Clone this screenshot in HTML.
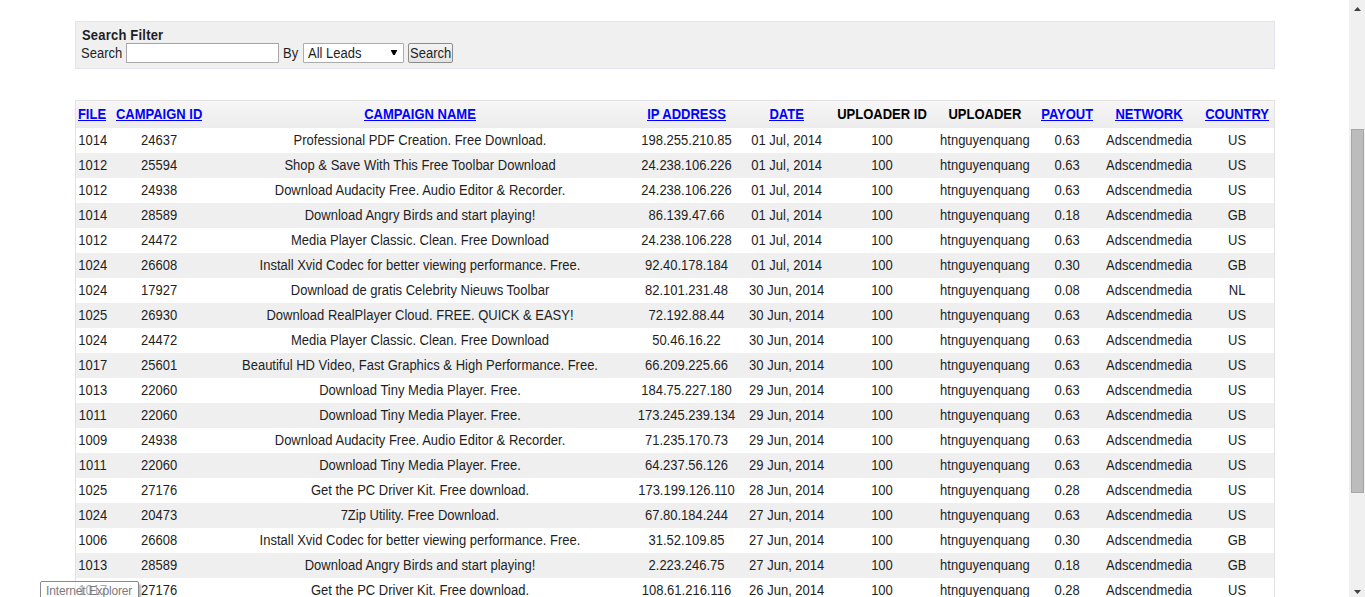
<!DOCTYPE html>
<html><head><meta charset="utf-8">
<style>
html,body{margin:0;padding:0;background:#fff;width:1365px;height:597px;overflow:hidden;position:relative;font-family:"Liberation Sans",sans-serif;font-size:13px;color:#1e1e1e}
.abs{position:absolute}
#filter{position:absolute;left:75px;top:21px;width:1198px;height:46px;background:#f0f0f0;border:1px solid #e6e0f0}
.t{position:absolute;white-space:nowrap;line-height:15px}
#inp{position:absolute;left:126px;top:43px;width:151px;height:18px;background:#fff;border:1px solid #ababab;border-top-color:#a3a3a3}
#sel{position:absolute;left:303px;top:43px;width:99px;height:18px;background:#fff;border:1px solid #acacac;border-radius:1px}
#btn{position:absolute;left:408px;top:43px;width:43px;height:18px;background:linear-gradient(#f4f4f4,#e4e4e4);border:1px solid #8c8c8c;border-radius:2px}
#tbl{position:absolute;left:75px;top:100px;width:1198px;height:497px;border:1px solid #e2e2e2;border-bottom:none}
#head{position:absolute;left:76px;top:101px;width:1198px;height:27px;background:linear-gradient(#f8f6f6,#ececec)}
.row{position:absolute;left:76px;width:1198px;height:25px}
.g{background:#efefef}
.c span,.t span{display:inline-block;transform:scaleY(1.08)}
.c{position:absolute;width:600px;text-align:center;white-space:nowrap;line-height:25px;top:0}
.h{font-weight:bold;line-height:27px;color:#000}
.h a{color:#00f;text-decoration:none;display:inline-block;position:relative;vertical-align:top}
.h a::after{content:'';position:absolute;left:0;right:0;top:19px;height:1px;background:#00f}
#sb{position:absolute;left:1349px;top:0;width:16px;height:597px;background:#f0f0f0}
#thumb{position:absolute;left:1351px;top:129px;width:11px;height:362px;background:#bcbcbc;border:1px solid #a6a6a6}
#tip{position:absolute;left:40px;top:581px;width:97px;height:20px;border:1px solid #8a8a8a;border-radius:2px;background:rgba(255,255,255,0.6);box-shadow:2px 3px 2px rgba(0,0,0,0.3)}
</style></head><body>
<div id="filter"></div>
<div class="t" style="left:82px;top:28px;font-weight:bold;letter-spacing:0.2px"><span>Search Filter</span></div>
<div class="t" style="left:81px;top:46px"><span>Search</span></div>
<div id="inp"></div>
<div class="t" style="left:283px;top:46px"><span>By</span></div>
<div id="sel"></div>
<div class="t" style="left:308px;top:46px"><span>All Leads</span></div>
<svg class="abs" style="left:391px;top:50px" width="6" height="6" viewBox="0 0 6 6"><path d="M0 0H6V0.8L3.8 5H2.2L0 0.8Z" fill="#000"/></svg>
<div id="btn"></div>
<div class="t" style="left:410px;top:46px"><span>Search</span></div>
<div id="tbl"></div>
<div id="head">
<div class="c h" style="left:-284.0px"><a><span>FILE</span></a></div>
<div class="c h" style="left:-216.9px"><a><span>CAMPAIGN ID</span></a></div>
<div class="c h" style="left:44.0px"><a><span>CAMPAIGN NAME</span></a></div>
<div class="c h" style="left:310.5px"><a><span>IP ADDRESS</span></a></div>
<div class="c h" style="left:410.7px"><a><span>DATE</span></a></div>
<div class="c h" style="left:506.0px"><span>UPLOADER ID</span></div>
<div class="c h" style="left:608.9px"><span>UPLOADER</span></div>
<div class="c h" style="left:691.2px"><a><span>PAYOUT</span></a></div>
<div class="c h" style="left:773.0px"><a><span>NETWORK</span></a></div>
<div class="c h" style="left:861.1px"><a><span>COUNTRY</span></a></div>
</div>
<div class="row" style="top:128px">
<div class="c" style="left:-283.3px"><span>1014</span></div>
<div class="c" style="left:-216.9px"><span>24637</span></div>
<div class="c" style="left:44.0px"><span>Professional PDF Creation. Free Download.</span></div>
<div class="c" style="left:310.5px"><span>198.255.210.85</span></div>
<div class="c" style="left:410.7px"><span>01 Jul, 2014</span></div>
<div class="c" style="left:506.0px"><span>100</span></div>
<div class="c" style="left:608.9px"><span>htnguyenquang</span></div>
<div class="c" style="left:691.2px"><span>0.63</span></div>
<div class="c" style="left:773.0px"><span>Adscendmedia</span></div>
<div class="c" style="left:861.1px"><span>US</span></div>
</div>
<div class="row g" style="top:153px">
<div class="c" style="left:-283.3px"><span>1012</span></div>
<div class="c" style="left:-216.9px"><span>25594</span></div>
<div class="c" style="left:44.0px"><span>Shop &amp; Save With This Free Toolbar Download</span></div>
<div class="c" style="left:310.5px"><span>24.238.106.226</span></div>
<div class="c" style="left:410.7px"><span>01 Jul, 2014</span></div>
<div class="c" style="left:506.0px"><span>100</span></div>
<div class="c" style="left:608.9px"><span>htnguyenquang</span></div>
<div class="c" style="left:691.2px"><span>0.63</span></div>
<div class="c" style="left:773.0px"><span>Adscendmedia</span></div>
<div class="c" style="left:861.1px"><span>US</span></div>
</div>
<div class="row" style="top:178px">
<div class="c" style="left:-283.3px"><span>1012</span></div>
<div class="c" style="left:-216.9px"><span>24938</span></div>
<div class="c" style="left:44.0px"><span>Download Audacity Free. Audio Editor &amp; Recorder.</span></div>
<div class="c" style="left:310.5px"><span>24.238.106.226</span></div>
<div class="c" style="left:410.7px"><span>01 Jul, 2014</span></div>
<div class="c" style="left:506.0px"><span>100</span></div>
<div class="c" style="left:608.9px"><span>htnguyenquang</span></div>
<div class="c" style="left:691.2px"><span>0.63</span></div>
<div class="c" style="left:773.0px"><span>Adscendmedia</span></div>
<div class="c" style="left:861.1px"><span>US</span></div>
</div>
<div class="row g" style="top:203px">
<div class="c" style="left:-283.3px"><span>1014</span></div>
<div class="c" style="left:-216.9px"><span>28589</span></div>
<div class="c" style="left:44.0px"><span>Download Angry Birds and start playing!</span></div>
<div class="c" style="left:310.5px"><span>86.139.47.66</span></div>
<div class="c" style="left:410.7px"><span>01 Jul, 2014</span></div>
<div class="c" style="left:506.0px"><span>100</span></div>
<div class="c" style="left:608.9px"><span>htnguyenquang</span></div>
<div class="c" style="left:691.2px"><span>0.18</span></div>
<div class="c" style="left:773.0px"><span>Adscendmedia</span></div>
<div class="c" style="left:861.1px"><span>GB</span></div>
</div>
<div class="row" style="top:228px">
<div class="c" style="left:-283.3px"><span>1012</span></div>
<div class="c" style="left:-216.9px"><span>24472</span></div>
<div class="c" style="left:44.0px"><span>Media Player Classic. Clean. Free Download</span></div>
<div class="c" style="left:310.5px"><span>24.238.106.228</span></div>
<div class="c" style="left:410.7px"><span>01 Jul, 2014</span></div>
<div class="c" style="left:506.0px"><span>100</span></div>
<div class="c" style="left:608.9px"><span>htnguyenquang</span></div>
<div class="c" style="left:691.2px"><span>0.63</span></div>
<div class="c" style="left:773.0px"><span>Adscendmedia</span></div>
<div class="c" style="left:861.1px"><span>US</span></div>
</div>
<div class="row g" style="top:253px">
<div class="c" style="left:-283.3px"><span>1024</span></div>
<div class="c" style="left:-216.9px"><span>26608</span></div>
<div class="c" style="left:44.0px"><span>Install Xvid Codec for better viewing performance. Free.</span></div>
<div class="c" style="left:310.5px"><span>92.40.178.184</span></div>
<div class="c" style="left:410.7px"><span>01 Jul, 2014</span></div>
<div class="c" style="left:506.0px"><span>100</span></div>
<div class="c" style="left:608.9px"><span>htnguyenquang</span></div>
<div class="c" style="left:691.2px"><span>0.30</span></div>
<div class="c" style="left:773.0px"><span>Adscendmedia</span></div>
<div class="c" style="left:861.1px"><span>GB</span></div>
</div>
<div class="row" style="top:278px">
<div class="c" style="left:-283.3px"><span>1024</span></div>
<div class="c" style="left:-216.9px"><span>17927</span></div>
<div class="c" style="left:44.0px"><span>Download de gratis Celebrity Nieuws Toolbar</span></div>
<div class="c" style="left:310.5px"><span>82.101.231.48</span></div>
<div class="c" style="left:410.7px"><span>30 Jun, 2014</span></div>
<div class="c" style="left:506.0px"><span>100</span></div>
<div class="c" style="left:608.9px"><span>htnguyenquang</span></div>
<div class="c" style="left:691.2px"><span>0.08</span></div>
<div class="c" style="left:773.0px"><span>Adscendmedia</span></div>
<div class="c" style="left:861.1px"><span>NL</span></div>
</div>
<div class="row g" style="top:303px">
<div class="c" style="left:-283.3px"><span>1025</span></div>
<div class="c" style="left:-216.9px"><span>26930</span></div>
<div class="c" style="left:44.0px"><span>Download RealPlayer Cloud. FREE. QUICK &amp; EASY!</span></div>
<div class="c" style="left:310.5px"><span>72.192.88.44</span></div>
<div class="c" style="left:410.7px"><span>30 Jun, 2014</span></div>
<div class="c" style="left:506.0px"><span>100</span></div>
<div class="c" style="left:608.9px"><span>htnguyenquang</span></div>
<div class="c" style="left:691.2px"><span>0.63</span></div>
<div class="c" style="left:773.0px"><span>Adscendmedia</span></div>
<div class="c" style="left:861.1px"><span>US</span></div>
</div>
<div class="row" style="top:328px">
<div class="c" style="left:-283.3px"><span>1024</span></div>
<div class="c" style="left:-216.9px"><span>24472</span></div>
<div class="c" style="left:44.0px"><span>Media Player Classic. Clean. Free Download</span></div>
<div class="c" style="left:310.5px"><span>50.46.16.22</span></div>
<div class="c" style="left:410.7px"><span>30 Jun, 2014</span></div>
<div class="c" style="left:506.0px"><span>100</span></div>
<div class="c" style="left:608.9px"><span>htnguyenquang</span></div>
<div class="c" style="left:691.2px"><span>0.63</span></div>
<div class="c" style="left:773.0px"><span>Adscendmedia</span></div>
<div class="c" style="left:861.1px"><span>US</span></div>
</div>
<div class="row g" style="top:353px">
<div class="c" style="left:-283.3px"><span>1017</span></div>
<div class="c" style="left:-216.9px"><span>25601</span></div>
<div class="c" style="left:44.0px"><span>Beautiful HD Video, Fast Graphics &amp; High Performance. Free.</span></div>
<div class="c" style="left:310.5px"><span>66.209.225.66</span></div>
<div class="c" style="left:410.7px"><span>30 Jun, 2014</span></div>
<div class="c" style="left:506.0px"><span>100</span></div>
<div class="c" style="left:608.9px"><span>htnguyenquang</span></div>
<div class="c" style="left:691.2px"><span>0.63</span></div>
<div class="c" style="left:773.0px"><span>Adscendmedia</span></div>
<div class="c" style="left:861.1px"><span>US</span></div>
</div>
<div class="row" style="top:378px">
<div class="c" style="left:-283.3px"><span>1013</span></div>
<div class="c" style="left:-216.9px"><span>22060</span></div>
<div class="c" style="left:44.0px"><span>Download Tiny Media Player. Free.</span></div>
<div class="c" style="left:310.5px"><span>184.75.227.180</span></div>
<div class="c" style="left:410.7px"><span>29 Jun, 2014</span></div>
<div class="c" style="left:506.0px"><span>100</span></div>
<div class="c" style="left:608.9px"><span>htnguyenquang</span></div>
<div class="c" style="left:691.2px"><span>0.63</span></div>
<div class="c" style="left:773.0px"><span>Adscendmedia</span></div>
<div class="c" style="left:861.1px"><span>US</span></div>
</div>
<div class="row g" style="top:403px">
<div class="c" style="left:-283.3px"><span>1011</span></div>
<div class="c" style="left:-216.9px"><span>22060</span></div>
<div class="c" style="left:44.0px"><span>Download Tiny Media Player. Free.</span></div>
<div class="c" style="left:310.5px"><span>173.245.239.134</span></div>
<div class="c" style="left:410.7px"><span>29 Jun, 2014</span></div>
<div class="c" style="left:506.0px"><span>100</span></div>
<div class="c" style="left:608.9px"><span>htnguyenquang</span></div>
<div class="c" style="left:691.2px"><span>0.63</span></div>
<div class="c" style="left:773.0px"><span>Adscendmedia</span></div>
<div class="c" style="left:861.1px"><span>US</span></div>
</div>
<div class="row" style="top:428px">
<div class="c" style="left:-283.3px"><span>1009</span></div>
<div class="c" style="left:-216.9px"><span>24938</span></div>
<div class="c" style="left:44.0px"><span>Download Audacity Free. Audio Editor &amp; Recorder.</span></div>
<div class="c" style="left:310.5px"><span>71.235.170.73</span></div>
<div class="c" style="left:410.7px"><span>29 Jun, 2014</span></div>
<div class="c" style="left:506.0px"><span>100</span></div>
<div class="c" style="left:608.9px"><span>htnguyenquang</span></div>
<div class="c" style="left:691.2px"><span>0.63</span></div>
<div class="c" style="left:773.0px"><span>Adscendmedia</span></div>
<div class="c" style="left:861.1px"><span>US</span></div>
</div>
<div class="row g" style="top:453px">
<div class="c" style="left:-283.3px"><span>1011</span></div>
<div class="c" style="left:-216.9px"><span>22060</span></div>
<div class="c" style="left:44.0px"><span>Download Tiny Media Player. Free.</span></div>
<div class="c" style="left:310.5px"><span>64.237.56.126</span></div>
<div class="c" style="left:410.7px"><span>29 Jun, 2014</span></div>
<div class="c" style="left:506.0px"><span>100</span></div>
<div class="c" style="left:608.9px"><span>htnguyenquang</span></div>
<div class="c" style="left:691.2px"><span>0.63</span></div>
<div class="c" style="left:773.0px"><span>Adscendmedia</span></div>
<div class="c" style="left:861.1px"><span>US</span></div>
</div>
<div class="row" style="top:478px">
<div class="c" style="left:-283.3px"><span>1025</span></div>
<div class="c" style="left:-216.9px"><span>27176</span></div>
<div class="c" style="left:44.0px"><span>Get the PC Driver Kit. Free download.</span></div>
<div class="c" style="left:310.5px"><span>173.199.126.110</span></div>
<div class="c" style="left:410.7px"><span>28 Jun, 2014</span></div>
<div class="c" style="left:506.0px"><span>100</span></div>
<div class="c" style="left:608.9px"><span>htnguyenquang</span></div>
<div class="c" style="left:691.2px"><span>0.28</span></div>
<div class="c" style="left:773.0px"><span>Adscendmedia</span></div>
<div class="c" style="left:861.1px"><span>US</span></div>
</div>
<div class="row g" style="top:503px">
<div class="c" style="left:-283.3px"><span>1024</span></div>
<div class="c" style="left:-216.9px"><span>20473</span></div>
<div class="c" style="left:44.0px"><span>7Zip Utility. Free Download.</span></div>
<div class="c" style="left:310.5px"><span>67.80.184.244</span></div>
<div class="c" style="left:410.7px"><span>27 Jun, 2014</span></div>
<div class="c" style="left:506.0px"><span>100</span></div>
<div class="c" style="left:608.9px"><span>htnguyenquang</span></div>
<div class="c" style="left:691.2px"><span>0.63</span></div>
<div class="c" style="left:773.0px"><span>Adscendmedia</span></div>
<div class="c" style="left:861.1px"><span>US</span></div>
</div>
<div class="row" style="top:528px">
<div class="c" style="left:-283.3px"><span>1006</span></div>
<div class="c" style="left:-216.9px"><span>26608</span></div>
<div class="c" style="left:44.0px"><span>Install Xvid Codec for better viewing performance. Free.</span></div>
<div class="c" style="left:310.5px"><span>31.52.109.85</span></div>
<div class="c" style="left:410.7px"><span>27 Jun, 2014</span></div>
<div class="c" style="left:506.0px"><span>100</span></div>
<div class="c" style="left:608.9px"><span>htnguyenquang</span></div>
<div class="c" style="left:691.2px"><span>0.30</span></div>
<div class="c" style="left:773.0px"><span>Adscendmedia</span></div>
<div class="c" style="left:861.1px"><span>GB</span></div>
</div>
<div class="row g" style="top:553px">
<div class="c" style="left:-283.3px"><span>1013</span></div>
<div class="c" style="left:-216.9px"><span>28589</span></div>
<div class="c" style="left:44.0px"><span>Download Angry Birds and start playing!</span></div>
<div class="c" style="left:310.5px"><span>2.223.246.75</span></div>
<div class="c" style="left:410.7px"><span>27 Jun, 2014</span></div>
<div class="c" style="left:506.0px"><span>100</span></div>
<div class="c" style="left:608.9px"><span>htnguyenquang</span></div>
<div class="c" style="left:691.2px"><span>0.18</span></div>
<div class="c" style="left:773.0px"><span>Adscendmedia</span></div>
<div class="c" style="left:861.1px"><span>GB</span></div>
</div>
<div class="row" style="top:578px">
<div class="c" style="left:-283.3px"><span>1017</span></div>
<div class="c" style="left:-216.9px"><span>27176</span></div>
<div class="c" style="left:44.0px"><span>Get the PC Driver Kit. Free download.</span></div>
<div class="c" style="left:310.5px"><span>108.61.216.116</span></div>
<div class="c" style="left:410.7px"><span>26 Jun, 2014</span></div>
<div class="c" style="left:506.0px"><span>100</span></div>
<div class="c" style="left:608.9px"><span>htnguyenquang</span></div>
<div class="c" style="left:691.2px"><span>0.28</span></div>
<div class="c" style="left:773.0px"><span>Adscendmedia</span></div>
<div class="c" style="left:861.1px"><span>US</span></div>
</div>
<div id="sb"></div>
<div id="thumb"></div>
<svg class="abs" style="left:1354px;top:7px" width="7" height="4" viewBox="0 0 7 4"><path d="M3.5 0L7 4H0Z" fill="#404040"/></svg>
<svg class="abs" style="left:1354px;top:590px" width="7" height="4" viewBox="0 0 7 4"><path d="M0 0H7L3.5 4Z" fill="#404040"/></svg>
<div id="tip"></div>
<div class="t" style="left:46px;top:584px;font-size:12px;letter-spacing:-0.15px;color:#7d7a7c"><span>Internet Explorer</span></div>
</body></html>
